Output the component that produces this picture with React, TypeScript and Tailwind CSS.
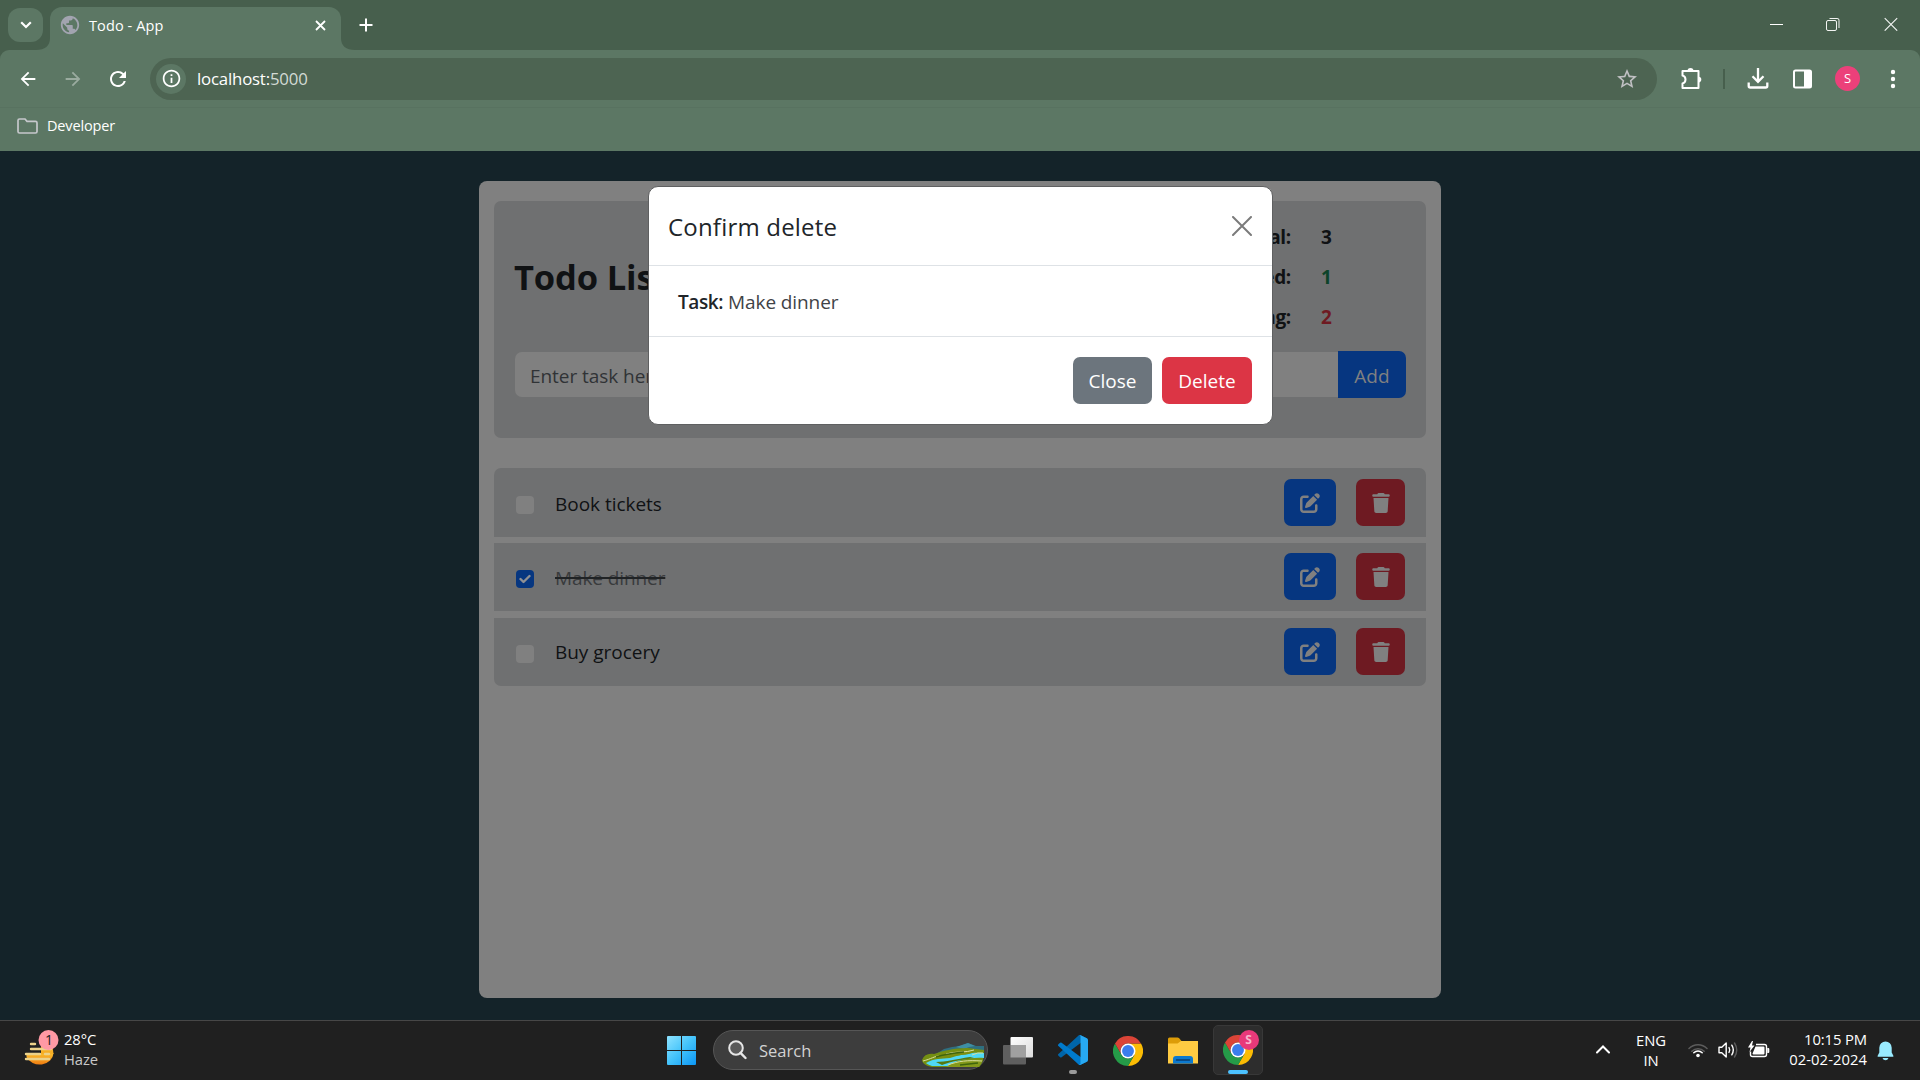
import type { ReactNode } from "react";
import { MdArrowBack, MdArrowForward, MdInfoOutline, MdPublic, MdRefresh, MdStarBorder } from "react-icons/md";
import { FaPenToSquare, FaTrash } from "react-icons/fa6";

function Slot({ w, children }: { w: string; children: ReactNode }) {
  return <div className={`flex h-full shrink-0 items-center justify-center ${w}`}>{children}</div>;
}

function TabStrip() {
  return (
    <div className="flex h-[50px] items-start bg-[#475f4d] text-white">
      <div className="mt-[8px] ml-[8px] flex h-[34px] w-[35px] items-center justify-center rounded-[12px] bg-[#5c7764]">
        <svg width="12" height="8" viewBox="0 0 12 8" fill="none" stroke="#fff" strokeWidth="2.2">
          <path d="M1.2 1.2 6 6l4.8-4.8" />
        </svg>
      </div>
      <svg className="mt-[38px] -ml-[7px]" width="14" height="12" viewBox="0 0 14 12">
        <path d="M0 12C9 12 14 8 14 0V12Z" fill="#5c7764" />
      </svg>
      <div className="mt-[7px] flex h-[43px] w-[291px] items-start rounded-t-[12px] bg-[#5c7764]">
        <MdPublic className="mt-[7px] ml-[9px] size-[22px] text-[#a2a4b0]" />
        <span className="mt-[9px] ml-[8px] text-[14.5px] leading-[20px] tracking-[0.1px] whitespace-nowrap">Todo - App</span>
        <svg className="mt-[13px] mr-[15px] ml-auto" width="11" height="11" viewBox="0 0 11 11" stroke="#fff" strokeWidth="1.8">
          <path d="M1 1l9 9M10 1l-9 9" />
        </svg>
      </div>
      <svg className="mt-[38px]" width="14" height="12" viewBox="0 0 14 12">
        <path d="M0 0C0 8 5 12 14 12H0Z" fill="#5c7764" />
      </svg>
      <svg className="mt-[18px] ml-[4px]" width="14" height="14" viewBox="0 0 14 14" stroke="#fff" strokeWidth="2">
        <path d="M7 .5v13M.5 7h13" />
      </svg>
      <div className="mt-[17px] mr-[22px] ml-auto flex items-center">
        <svg width="13" height="14" viewBox="0 0 13 14" stroke="#fff">
          <path d="M0 7.5h13" />
        </svg>
        <svg className="ml-[43px]" width="14" height="14" viewBox="0 0 14 14" fill="none" stroke="#f2f4f2">
          <rect x=".5" y="3.5" width="10" height="10" rx="1.5" />
          <path d="M3.5 1.5h7.5a1.8 1.8 0 0 1 2 2V11" />
        </svg>
        <svg className="ml-[44px]" width="14" height="14" viewBox="0 0 14 14" stroke="#f2f4f2" strokeWidth="1.1">
          <path d="M.7 1.2l12.5 12.5M13.2 1.2L.7 13.7" />
        </svg>
      </div>
    </div>
  );
}

function Toolbar() {
  return (
    <div className="bg-[#475f4d]">
      <div className="flex h-[57px] items-center rounded-t-[9px] bg-[#5c7764] px-[5px] text-white">
        <Slot w="w-[45px]"><MdArrowBack className="size-[22px]" /></Slot>
        <Slot w="w-[45px]"><MdArrowForward className="size-[22px] text-[#9aab9f]" /></Slot>
        <Slot w="w-[45px]"><MdRefresh className="size-[24px]" /></Slot>
        <div className="mr-[11px] ml-[10px] flex h-[42px] flex-1 items-center rounded-full bg-[#4d6452] pl-[6px]">
          <div className="flex size-[30px] items-center justify-center rounded-full bg-[#5c7764]">
            <MdInfoOutline className="size-[21px]" />
          </div>
          <span className="mt-px ml-[11px] text-[16.8px] leading-[24px] tracking-[-0.18px]">
            localhost:<span className="text-[#d3dbd5]">5000</span>
          </span>
          <MdStarBorder className="mr-[18px] ml-auto size-[24px] text-[#c0c0c3]" />
        </div>
        <Slot w="w-[45px]">
          <svg width="22" height="22" viewBox="0 0 22 22" fill="none" stroke="#fff" strokeWidth="2" strokeLinejoin="round">
            <path d="M2.5 3H18.5V20H2.5V15.5C6.5 14.5 6.5 8.5 2.5 7.5Z" />
            <path d="M7.5 3a3 3 0 0 1 6 0ZM18.5 8.8a2.8 2.8 0 0 1 0 5.6Z" fill="#fff" stroke="none" />
          </svg>
        </Slot>
        <div className="mr-[10px] ml-[10px] h-[20px] w-[2px] bg-[#475f4d]" />
        <Slot w="w-[45px]">
          <svg width="22" height="21" viewBox="0 0 22 21" fill="none" stroke="#fff" strokeWidth="2.3">
            <path d="M11 0v13.5M5.5 8.3l5.5 5.5 5.5-5.5M1.7 14.5v3.5q0 1.5 1.5 1.5h15.6q1.5 0 1.5-1.5v-3.5" />
          </svg>
        </Slot>
        <Slot w="w-[45px]">
          <svg width="19" height="20" viewBox="0 0 19 20">
            <rect x="1" y="1.5" width="17" height="17" rx="1.5" fill="none" stroke="#fff" strokeWidth="2" />
            <path d="M11 1h7v18h-7z" fill="#fff" />
          </svg>
        </Slot>
        <Slot w="w-[45px]">
          <div className="flex size-[25px] items-center justify-center rounded-full bg-[#ec407a] text-[13px]">S</div>
        </Slot>
        <Slot w="w-[45px]">
          <svg width="6" height="20" viewBox="0 0 6 20" fill="#fff">
            <circle cx="3" cy="3" r="2.2" /><circle cx="3" cy="10" r="2.2" /><circle cx="3" cy="17" r="2.2" />
          </svg>
        </Slot>
      </div>
      <div className="flex h-[44px] items-center border-t border-[#587260] bg-[#5c7764] pb-[7px] pl-[17px] text-white">
        <svg width="21" height="16" viewBox="0 0 21 16" fill="none" stroke="#c6c8cc" strokeWidth="1.7">
          <path d="M1 2.5Q1 1 2.5 1H8l2 2.3h8.5q1.5 0 1.5 1.5v8.7q0 1.5-1.5 1.5h-16Q1 15 1 13.5Z" />
        </svg>
        <span className="ml-[9px] text-[14.5px] leading-[20px] tracking-[-0.15px]">Developer</span>
      </div>
    </div>
  );
}

const stats = [
  { label: "Total:", value: 3, color: "text-[#101214]" },
  { label: "Completed:", value: 1, color: "text-[#0c4329]" },
  { label: "Pending:", value: 2, color: "text-[#6e1a22]" },
];

const todos = [
  { text: "Book tickets", done: false, shape: "h-[69px] rounded-t-[7px] pt-[11px]", lift: "mt-[11px]" },
  { text: "Make dinner", done: true, shape: "mt-[6px] h-[68px] pt-[10px]", lift: "mt-[11px]" },
  { text: "Buy grocery", done: false, shape: "mt-[7px] h-[68px] rounded-b-[7px] pt-[10px]", lift: "mt-[10px]" },
];

function TodoCard() {
  return (
    <div className="h-[817px] w-[962px] rounded-[8px] bg-[#808080] px-[15px] pt-[20px] text-[#101214]">
      <div className="h-[237px] rounded-[7px] bg-[#6f7071] px-[20px]">
        <div className="flex h-[150px] items-start justify-between">
          <h1 className="mt-[52px] text-[34.5px] leading-[48px] font-bold tracking-[-0.15px]">Todo List</h1>
          <div className="mt-[16px] mr-[68px] flex flex-col">
            {stats.map((s) => (
              <div key={s.label} className="flex h-[40px] items-center justify-end text-[19px] font-bold">
                <span className="tracking-[-0.3px]">{s.label}</span>
                <span className={`ml-[30px] w-[17px] ${s.color}`}>{s.value}</span>
              </div>
            ))}
          </div>
        </div>
        <div className="flex h-[47px] items-center pl-px">
          <div className="flex h-[45px] flex-1 items-center rounded-l-[7px] bg-[#808080] pt-[3px] pl-[15px] text-[19px] tracking-[-0.05px] text-[#303336]">
            Enter task here
          </div>
          <button className="h-[47px] w-[68px] rounded-r-[7px] bg-[#063680] pt-[3px] text-[19px] text-[#808080]">Add</button>
        </div>
      </div>
      <div className="mt-[30px]">
        {todos.map((t) => (
          <div key={t.text} className={`flex items-start bg-[#6f7071] pr-[21px] pl-[22px] ${t.shape}`}>
            <div className={`mt-[17px] flex size-[18px] items-center justify-center rounded-[4px] ${t.done ? "bg-[#063680]" : "bg-[#808080]"}`}>
              {t.done && (
                <svg width="12" height="10" viewBox="0 0 12 10" fill="none" stroke="#8f9093" strokeWidth="2.4" strokeLinecap="round" strokeLinejoin="round">
                  <path d="M1.5 5l3 3L10.5 2" />
                </svg>
              )}
            </div>
            <span
              className={`ml-[21px] text-[19px] leading-[28px] ${t.lift} ${
                t.done ? "tracking-[-0.1px] text-[#393b3d] line-through decoration-[#202325] decoration-2" : "tracking-[-0.03px]"
              }`}
            >
              {t.text}
            </span>
            <button className="ml-auto flex h-[47px] w-[52px] items-center justify-center rounded-[7px] bg-[#063680] pt-px text-[#808080]">
              <FaPenToSquare className="size-[20px]" />
            </button>
            <button className="ml-[20px] flex h-[47px] w-[49px] items-center justify-center rounded-[7px] bg-[#6e1a22] pt-px text-[#808080]">
              <FaTrash className="h-[20px] w-[18px]" />
            </button>
          </div>
        ))}
      </div>
    </div>
  );
}

function DeleteModal() {
  return (
    <div className="absolute top-[35px] left-[648px] w-[625px] rounded-[10px] border border-[#5f6061] bg-white text-[#212529]">
      <div className="flex h-[79px] items-center justify-between border-b border-[#dee2e6] pr-[20px] pl-[19px]">
        <h2 className="mt-[2px] text-[24px] leading-[36px] font-medium tracking-[0.2px]">Confirm delete</h2>
        <svg width="20" height="20" viewBox="0 0 20 20" stroke="#7b7b7b" strokeWidth="2" strokeLinecap="round">
          <path d="M1 1l18 18M19 1L1 19" />
        </svg>
      </div>
      <div className="flex h-[71px] items-center border-b border-[#dee2e6] pt-[2px] pl-[29px] text-[19px] tracking-[-0.1px]">
        <span className="font-semibold tracking-[-0.4px]">Task:</span>
        <span className="ml-[5px] text-[#3f4347]">Make dinner</span>
      </div>
      <div className="flex h-[87px] items-center justify-end gap-[10px] pr-[20px] text-[19px] text-white">
        <button className="h-[47px] w-[79px] rounded-[7px] bg-[#6c757d] pt-px">Close</button>
        <button className="h-[47px] w-[90px] rounded-[7px] bg-[#dc3545] pt-px">Delete</button>
      </div>
    </div>
  );
}

function ChromeLogo() {
  return (
    <svg width="30" height="30" viewBox="0 0 48 48">
      <path d="M24 12H44.8A24 24 0 0 1 24 48L34.4 30Z" fill="#fbbc04" />
      <path d="M3.2 12A24 24 0 0 0 24 48L34.4 30A12 12 0 0 1 13.6 30Z" fill="#259b48" />
      <path d="M3.2 12A24 24 0 0 1 44.8 12H24A12 12 0 0 0 13.6 30Z" fill="#db4437" />
      <circle cx="24" cy="24" r="12" fill="#fff" />
      <circle cx="24" cy="24" r="9.5" fill="#3b7ded" />
    </svg>
  );
}

function SearchArt() {
  return (
    <svg width="62" height="24" viewBox="0 0 62 24">
      <path d="M14 11 22 6l8-2 8-1 8-3 8 3h8v9H14Z" fill="#2f6f80" />
      <path d="M34 4 46 0l7 3-6 1-5 2Z" fill="#3f8fa4" />
      <path d="M0 17C2 12 6 10 12 11 20 8 32 5 46 5l16 2c0 8-1 13-5 17H10C4 23 0 20 0 17Z" fill="#748f12" />
      <path d="M4 20c8-5 16-4 24-5 10-3 20-6 34-5v5c-16-1-28 3-36 8H10c-3-1-5-2-6-3Z" fill="#4fd8f5" />
      <path d="M12 13c10-4 22-6 40-6l-2 3c-8 3-20 2-30 5-4 0-6-1-8-2Z" fill="#7c8f10" />
      <path d="M24 24c8-6 20-8 37-7l-4 7H24Z" fill="#84991a" />
      <path d="M14 19c10 0 20-3 34-5l4 1c-12 2-22 3-32 7Z" fill="#55780f" />
      <path d="M1 18c8-2 12-5 16-5M26 22c10-4 20-5 34-4M24 11c10-3 20-1 28-4M50 12q6-3 11-2" fill="none" stroke="#d9dfa0" strokeWidth="1" />
      <path d="M14 14c9-3 18-4 28-5M38 22l18-2" fill="none" stroke="#3f650c" strokeWidth="1.4" />
    </svg>
  );
}

function Taskbar() {
  return (
    <div className="flex h-[60px] items-center border-t border-[#474747] bg-[#202020] text-white">
      <div className="flex h-full w-[654px] items-center pl-[24px]">
        <svg width="36" height="40" viewBox="0 0 36 40" className="-mt-[5px]">
          <defs>
            <linearGradient id="sun" x1="0" y1="0" x2="0" y2="1">
              <stop offset="0" stopColor="#fbc02d" /><stop offset="1" stopColor="#ee7c12" />
            </linearGradient>
          </defs>
          <path d="M2.5 25H29.5A14 12 0 0 1 2.5 29Z" fill="url(#sun)" />
          <path d="M17 18H28.5L29.5 26H17Z" fill="#f6ae26" />
          <path d="M7 16h4M7 21h20M2 26h14M21 26h4M2 31h23" stroke="#ecd28a" strokeWidth="2.4" strokeLinecap="round" />
          <circle cx="24.5" cy="12" r="10" fill="#ff99a4" />
          <text x="25" y="17" textAnchor="middle" fontSize="14" fill="#202020">1</text>
        </svg>
        <div className="-mt-[3px] ml-[4px] text-[14.8px] leading-[20px] tracking-[-0.1px]">
          <div>28°C</div>
          <div className="text-[#c8c8c8]">Haze</div>
        </div>
      </div>
      <Slot w="w-[55px]">
        <svg width="29" height="29" viewBox="0 0 29 29">
          <defs>
            <linearGradient id="win" x1="0" y1="0" x2="1" y2="1">
              <stop offset="0" stopColor="#8fe3ff" /><stop offset=".5" stopColor="#43c3fb" /><stop offset="1" stopColor="#0b96f5" />
            </linearGradient>
          </defs>
          <path d="M1 0h13v14H0V1q0-1 1-1ZM15 0h13q1 0 1 1v13H15ZM0 15h14v14H1q-1 0-1-1ZM15 15h14v13q0 1-1 1H15Z" fill="url(#win)" />
        </svg>
      </Slot>
      <div className="-mt-px ml-[4px] flex h-[40px] w-[275px] items-center rounded-full border border-[#565656] bg-[#3d3d3d] pl-[14px]">
        <svg width="19" height="20" viewBox="0 0 19 20">
          <circle cx="8" cy="8" r="6.8" fill="#5a5a5a" stroke="#e6e6e6" strokeWidth="2" />
          <path d="M12.5 12.8 17.5 18" stroke="#e6e6e6" strokeWidth="2.4" strokeLinecap="round" />
        </svg>
        <span className="mt-[2px] ml-[12px] text-[16.5px] leading-[24px] text-[#d2d2d2]">Search</span>
        <div className="mt-[10px] mr-[3px] ml-auto"><SearchArt /></div>
      </div>
      <div className="ml-[2px] flex h-full">
        <Slot w="w-[55px]">
          <svg width="30" height="28" viewBox="0 0 30 28">
            <defs>
              <linearGradient id="tv" x1="0" y1="0" x2="1" y2="1">
                <stop offset="0" stopColor="#fff" /><stop offset="1" stopColor="#dcdcdc" />
              </linearGradient>
            </defs>
            <rect x="7.5" y="0" width="22.5" height="20.5" rx="1" fill="url(#tv)" />
            <rect x="0" y="8" width="23" height="19.5" rx="1" fill="#5f5f5f" />
            <path d="M7.5 8H23v12.5H7.5z" fill="#a0a0a0" />
          </svg>
        </Slot>
        <div className="flex h-full w-[55px] flex-col items-center pt-[14px]">
          <svg width="30" height="30" viewBox="0 0 100 100">
            <path d="M96 10.5 75.5 1A6 6 0 0 0 68.5 2L1.5 63a4 4 0 0 0 0 6l5.5 5a4 4 0 0 0 5 .2L93 13c3-2 7 0 7 3v-.2c0-2.3-1.5-4.3-4-5.3Z" fill="#0065a9" />
            <path d="M96 89.5 75.5 99a6 6 0 0 1-7-1L1.5 37a4 4 0 0 1 0-6L7 26a4 4 0 0 1 5-.2L93 87c3 2 7 0 7-3v.2c0 2.3-1.5 4.3-4 5.3Z" fill="#007acc" />
            <path d="M75.5 99a6 6 0 0 1-7-1c2.3 2.3 6.5.7 6.5-2.6V4.7C75 1.3 70.8-.4 68.5 2a6 6 0 0 1 7-1L96 10.7a6 6 0 0 1 4 5.7v67.2a6 6 0 0 1-4 5.7Z" fill="#27a9f2" />
          </svg>
          <div className="mt-[5px] h-[4px] w-[8px] rounded-full bg-[#9a9a9a]" />
        </div>
        <Slot w="w-[55px]"><ChromeLogo /></Slot>
        <Slot w="w-[55px]">
          <svg width="30" height="27" viewBox="0 0 30 27">
            <path d="M0 2Q0 .5 1.5.5h8q1 0 1.7.8L13.5 4H30v5H0Z" fill="#dc9c08" />
            <path d="M0 6.5h9.5L13 4h17v22.5H0Z" fill="#ffcb42" />
            <path d="M5 26.5V22q0-3 3-3h14q3 0 3 3v4.5Z" fill="#0c79cf" />
            <path d="M8.5 23h13" stroke="#083c72" strokeWidth="1.5" strokeLinecap="round" />
          </svg>
        </Slot>
        <Slot w="w-[55px]">
          <div className="relative -mt-px flex h-[50px] w-[50px] flex-col items-center rounded-[5px] border border-[#383838] bg-[#2d2d2d] pt-[9px]">
            <ChromeLogo />
            <div className="mt-[5px] h-[4px] w-[20px] rounded-full bg-[#4cc2ff]" />
            <div className="absolute top-[4px] left-[25px] flex size-[20px] items-center justify-center rounded-full bg-[#e8397a] text-[12px] font-bold text-[#f6b6cd]">S</div>
          </div>
        </Slot>
      </div>
      <div className="flex h-full flex-1 items-center justify-end pr-[26px] pb-[2px]">
        <svg width="14" height="9" viewBox="0 0 14 9" fill="none" stroke="#fff" strokeWidth="2" strokeLinecap="round">
          <path d="M1 7.5l6-6 6 6" />
        </svg>
        <div className="ml-[25px] w-[32px] text-center text-[14.8px] leading-[20px] tracking-[-0.1px]">
          <div>ENG</div>
          <div>IN</div>
        </div>
        <svg className="ml-[21px]" width="20" height="16" viewBox="0 0 20 16" fill="none" strokeWidth="1.5" strokeLinecap="round">
          <path d="M1 6.5a12.5 12.5 0 0 1 18 0" stroke="#5c5c5c" />
          <path d="M3.8 9.2a8.8 8.8 0 0 1 12.4 0" stroke="#5c5c5c" />
          <path d="M5.8 10.8a6 6 0 0 1 8.4 0" stroke="#fff" />
          <circle cx="10" cy="13.5" r="1.8" fill="#fff" />
        </svg>
        <svg className="ml-[10px]" width="20" height="18" viewBox="0 0 20 18" fill="none" stroke="#fff" strokeWidth="1.4" strokeLinecap="round" strokeLinejoin="round">
          <path d="M1 6.2h2.8L8.2 2v14l-4.4-4.2H1Z" />
          <path d="M11 6.5q1.5 2.5 0 5M13.8 4.2q3 4.8 0 9.6" />
          <path d="M16.5 2q4.5 7 0 14" stroke="#5c5c5c" />
        </svg>
        <svg className="ml-[10px]" width="22" height="18" viewBox="0 0 22 18">
          <path d="M8 3.5h8.500q2 0 2 2v8q0 2-2 2h-12q-2 0-2-2v-3" fill="none" stroke="#fff" strokeWidth="1.4" />
          <path d="M7.5 5.5h8q1 0 1 1v6q0 1-1 1h-10q-1 0-1-1ZM19.3 7h1q1 0 1 1v3q0 1-1 1h-1Z" fill="#fff" />
          <path d="M4 0 0 6.5h2.5L1.5 11 6.5 4.5H4L5 0Z" fill="#fff" />
        </svg>
        <div className="-mt-[2px] ml-[17px] w-[80px] text-right text-[14.8px] leading-[20px] whitespace-nowrap">
          <div className="tracking-[-0.1px]">10:15 PM</div>
          <div className="tracking-[0.05px]">02-02-2024</div>
        </div>
        <svg className="mt-[2px] ml-[10px]" width="17" height="20" viewBox="0 0 17 20" fill="#99ebff">
          <path d="M8.5.5a6.2 6.2 0 0 1 6.2 6.2v4.8l1.8 3.5q.2.8-.7.8H1.2q-.9 0-.7-.8l1.8-3.5V6.7A6.2 6.2 0 0 1 8.5.5Z" />
          <path d="M5.5 17h6q-.8 2.3-3 2.3t-3-2.3Z" />
        </svg>
      </div>
    </div>
  );
}

export default function App() {
  return (
    <div className="flex h-[1080px] w-[1920px] flex-col overflow-hidden bg-[#142329] font-['Open_Sans','Noto_Sans',sans-serif]">
      <TabStrip />
      <Toolbar />
      <main className="relative flex flex-1 items-start justify-center pt-[30px]">
        <TodoCard />
        <DeleteModal />
      </main>
      <Taskbar />
    </div>
  );
}
